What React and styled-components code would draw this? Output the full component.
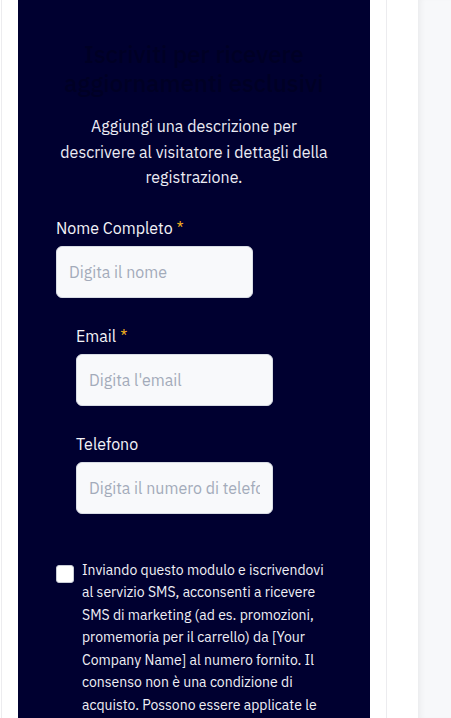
import React from 'react'
import styled, { createGlobalStyle } from 'styled-components'

const GlobalStyle = createGlobalStyle`
  html, body {
    margin: 0;
    padding: 0;
    background: #ffffff;
  }
  body {
    font-family: "IBM Plex Sans", "Noto Sans", "Liberation Sans", sans-serif;
    overflow: hidden;
  }
`

const Page = styled.div`
  display: flex;
  height: 718px;
  overflow: hidden;
`

const Editor = styled.div`
  width: 418px;
  flex-shrink: 0;
  padding-left: 1px;
  box-sizing: border-box;
`

const Card = styled.div`
  width: 386px;
  height: 100%;
  box-sizing: border-box;
  border-left: 1px solid #ececef;
  border-right: 1px solid #ececef;
  padding: 0 16px;
  background: #fff;
`

const Sidebar = styled.aside`
  flex: 1;
  background: #f7f8fa;
  box-shadow: inset 6px 0 6px -4px rgba(0, 0, 0, 0.06);
`

const Panel = styled.section`
  background: #000030;
  height: 100%;
  padding: 40px 38px 0;
  box-sizing: border-box;
`

const Heading = styled.h2`
  margin: 0 auto;
  width: 276px;
  text-align: center;
  font-size: 24px;
  line-height: 29px;
  font-weight: 500;
  color: #000025;
`

const Description = styled.p`
  margin: 16px 0 0;
  text-align: center;
  font-size: 16px;
  line-height: 25.5px;
  color: #ececf4;
`

const Field = styled.div`
  margin-top: ${(p) => p.$top}px;
  padding-left: ${(p) => p.$indent || 0}px;
`

const Label = styled.label`
  display: block;
  font-size: 16px;
  line-height: 24px;
  color: #f4f4f8;
`

const Star = styled.span`
  color: #f2b01e;
  margin-left: 4px;
`

const Input = styled.input`
  display: block;
  margin-top: 6px;
  width: 197px;
  height: 52px;
  box-sizing: border-box;
  border: 1px solid #d8dce4;
  border-radius: 6px;
  background: #f8f9fb;
  padding: 0 12px;
  font-family: inherit;
  font-size: 16px;
  color: #333;
  outline: none;

  &::placeholder {
    color: #a3abba;
  }
`

const Consent = styled.div`
  display: flex;
  align-items: flex-start;
  gap: 8px;
  margin-top: 45px;
`

const Box = styled.span`
  flex-shrink: 0;
  width: 18px;
  height: 18px;
  margin-top: 6px;
  box-sizing: border-box;
  background: #fff;
  border: 1px solid #c8ccd6;
  border-radius: 3px;
`

const ConsentText = styled.p`
  margin: 0;
  width: 250px;
  font-size: 14px;
  line-height: 22.6px;
  color: #f0f0f6;
`

export default function App() {
  return (
    <>
      <GlobalStyle />
      <Page>
        <Editor>
          <Card>
            <Panel>
              <Heading>Iscriviti per ricevere aggiornamenti esclusivi</Heading>
              <Description>
                Aggiungi una descrizione per descrivere al visitatore i dettagli della registrazione.
              </Description>
              <Field $top={25}>
                <Label>
                  Nome Completo<Star>*</Star>
                </Label>
                <Input placeholder="Digita il nome" />
              </Field>
              <Field $top={26} $indent={20}>
                <Label>
                  Email<Star>*</Star>
                </Label>
                <Input placeholder="Digita l'email" />
              </Field>
              <Field $top={26} $indent={20}>
                <Label>Telefono</Label>
                <Input placeholder="Digita il numero di telefono" />
              </Field>
              <Consent>
                <Box />
                <ConsentText>
                  Inviando questo modulo e iscrivendovi al servizio SMS, acconsenti a ricevere SMS di
                  marketing (ad es. promozioni, promemoria per il carrello) da [Your Company Name] al
                  numero fornito. Il consenso non è una condizione di acquisto. Possono essere
                  applicate le tariffe per messaggi e dati.
                </ConsentText>
              </Consent>
            </Panel>
          </Card>
        </Editor>
        <Sidebar />
      </Page>
    </>
  )
}
